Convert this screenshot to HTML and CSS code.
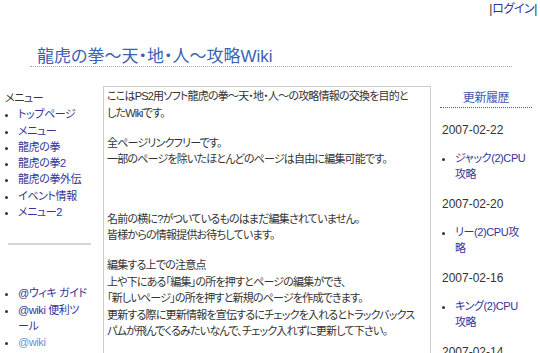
FILE: index.html
```html
<!DOCTYPE html>
<html lang="ja">
<head>
    <meta charset="UTF-8">
    <title>龍虎の拳～天・地・人～攻略Wiki</title>
    <link rel="stylesheet" href="styles.css">
</head>
<body>

<div class="topbar">|<a href="#">ログイン</a>|</div>

<h1 class="site-title"><a href="#">龍虎の拳～天・地・人～攻略Wiki</a></h1>

<div class="layout">
    <!-- メニュー -->
    <div class="side">
        <div class="side-head">メニュー</div>
        <ul class="menu">
            <li><a href="#">トップページ</a></li>
            <li><a href="#">メニュー</a></li>
            <li><a href="#">龍虎の拳</a></li>
            <li><a href="#">龍虎の拳2</a></li>
            <li><a href="#">龍虎の拳外伝</a></li>
            <li><a href="#">イベント情報</a></li>
            <li><a href="#">メニュー2</a></li>
        </ul>
        <hr class="side-rule">
        <ul class="menu links">
            <li><a href="#">@ウィキ ガイド</a></li>
            <li><a href="#">@wiki 便利ツール</a></li>
            <li><a href="#" class="visited">@wiki</a></li>
        </ul>
    </div>

    <!-- 本文 -->
    <div class="main">
        <p>ここはPS2用ソフト龍虎の拳～天・地・人～の攻略情報の交換を目的と<br>したWikiです。</p>
        <p>全ページリンクフリーです。<br>一部のページを除いたほとんどのページは自由に編集可能です。</p>
        <p class="gap">名前の横に?がついているものはまだ編集されていません。<br>皆様からの情報提供お待ちしています。</p>
        <p>編集する上での注意点<br>
        上や下にある「編集」の所を押すとページの編集ができ、<br>
        「新しいページ」の所を押すと新規のページを作成できます。<br>
        更新する際に更新情報を宣伝するにチェックを入れるとトラックバックス<br>
        パムが飛んでくるみたいなんで、チェック入れずに更新して下さい。</p>
    </div>

    <!-- 更新履歴 -->
    <div class="recent">
        <div class="recent-head">更新履歴</div>
        <div class="day">2007-02-22</div>
        <ul class="changes">
            <li><a href="#">ジャック(2)CPU攻略</a></li>
        </ul>
        <div class="day">2007-02-20</div>
        <ul class="changes">
            <li><a href="#">リー(2)CPU攻略</a></li>
        </ul>
        <div class="day">2007-02-16</div>
        <ul class="changes">
            <li><a href="#">キング(2)CPU攻略</a></li>
        </ul>
        <div class="day">2007-02-14</div>
    </div>
</div>

</body>
</html>
```

FILE: styles.css
```css
body {
    margin: 0;
    font-family: "Liberation Sans", "Noto Sans CJK JP", sans-serif;
    font-feature-settings: "palt";
    font-size: 11px;
    letter-spacing: -0.4px;
    color: #333;
    background: #fff;
    overflow: hidden;
}
a {
    color: #333399;
    text-decoration: none;
}
a.visited {
    color: #6b8fd6;
}
.topbar {
    text-align: right;
    padding: 2px 3px 0 0;
    line-height: 14px;
    font-size: 12px;
}
.site-title {
    margin: 32px 28px 0 30px;
    padding: 0 0 0 7px;
    font-size: 17px;
    letter-spacing: 0;
    font-weight: normal;
    line-height: 18px;
    border-bottom: 1px dotted #aaa;
}
.site-title a {
    color: #3d5fb4;
}
.layout {
    display: flex;
    align-items: flex-start;
    margin-top: 19px;
}
.side {
    width: 103px;
    box-sizing: border-box;
    padding: 4px 14px 0 5px;
    line-height: 16.3px;
    line-break: loose;
}
.menu {
    margin: 0;
    padding-left: 13px;
}
.side-rule {
    border: none;
    border-top: 2px solid #d8d5cc;
    margin: 23px 0 40px 3px;
    width: 83px;
}
.main {
    width: 328px;
    height: 270px;
    box-sizing: border-box;
    border: 1px solid #ccc;
    border-bottom: none;
    padding: 1px 3px;
    line-height: 16.5px;
    letter-spacing: -0.8px;
    white-space: nowrap;
}
.main p {
    margin: 0 0 13.5px;
}
.main p.gap {
    margin-top: 43px;
}
.recent {
    width: 92px;
    margin-left: 9px;
    padding-top: 4px;
    line-height: 16px;
}
.recent-head {
    text-align: center;
    color: #4456aa;
    border-bottom: 1px dotted #4456aa;
    padding-bottom: 1px;
    font-size: 12px;
}
.day {
    margin: 14px 0 0 2px;
    font-size: 12px;
    letter-spacing: 0;
}
.changes {
    margin: 13px 0 0;
    padding-left: 15px;
    padding-right: 4px;
    line-height: 15.5px;
}
```
